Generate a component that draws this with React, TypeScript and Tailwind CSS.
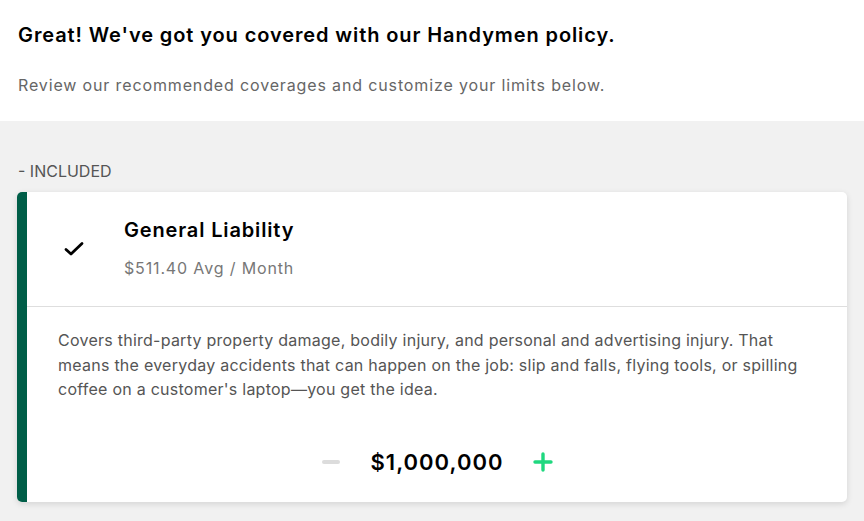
import React from "react";

export default function App() {
  return (
    <div className="w-[864px] h-[521px] overflow-hidden bg-[#f1f1f1] text-[#111]" style={{ fontFamily: "Inter, 'Noto Sans', sans-serif" }}>
      <div className="bg-white px-[18px] pt-[20px] h-[121px]">
        <h1 className="text-[20px] font-semibold leading-[30px] tracking-[0.9px] text-black">Great! We've got you covered with our Handymen policy.</h1>
        <p className="mt-[23px] text-[16px] leading-[24px] tracking-[0.86px] text-[#666]">Review our recommended coverages and customize your limits below.</p>
      </div>
      <div className="px-[17px] pt-[38px]">
        <div className="text-[16px] leading-[24px] text-[#555] pl-[1px]">- INCLUDED</div>
        <div className="mt-[9px] flex rounded-[5px] bg-white shadow-[0_2px_6px_rgba(0,0,0,0.12)] overflow-hidden w-[830px]">
          <div className="w-[10px] shrink-0 bg-[#005e48]" />
          <div className="flex-1">
            <div className="flex items-center h-[115px] border-b border-[#dedede]">
              <div className="w-[97px] flex justify-center pr-[3px]">
                <svg width="20" height="16" viewBox="0 0 20 16" fill="none">
                  <path d="M2 8.5 L7 13 L18 2.5" stroke="#000" strokeWidth="2.8" strokeLinecap="round" strokeLinejoin="round" />
                </svg>
              </div>
              <div className="-mt-[4px]">
                <div className="text-[20px] font-semibold leading-[28px] tracking-[0.85px] text-black">General Liability</div>
                <div className="mt-[13px] text-[16px] leading-[22px] tracking-[0.85px] text-[#777]">$511.40 Avg / Month</div>
              </div>
            </div>
            <div className="px-[31px] pt-[21px] text-[16px] leading-[24.5px] tracking-[0.25px] text-[#555]">
              Covers third-party property damage, bodily injury, and personal and advertising injury. That means the everyday accidents that can happen on the job: slip and falls, flying tools, or spilling coffee on a customer's laptop—you get the idea.
            </div>
            <div className="flex items-center justify-center gap-[30px] pt-[45px] pb-[25px]">
              <svg width="20" height="6" viewBox="0 0 20 6"><rect x="1" y="1" width="18" height="4" rx="2" fill="#dcdcdc" /></svg>
              <div className="text-[22px] font-semibold leading-[30px] tracking-[1px] text-black">$1,000,000</div>
              <svg width="20" height="20" viewBox="0 0 20 20"><path d="M10 2 V18 M2 10 H18" stroke="#1fd87f" strokeWidth="3.4" strokeLinecap="round" /></svg>
            </div>
          </div>
        </div>
      </div>
    </div>
  );
}
